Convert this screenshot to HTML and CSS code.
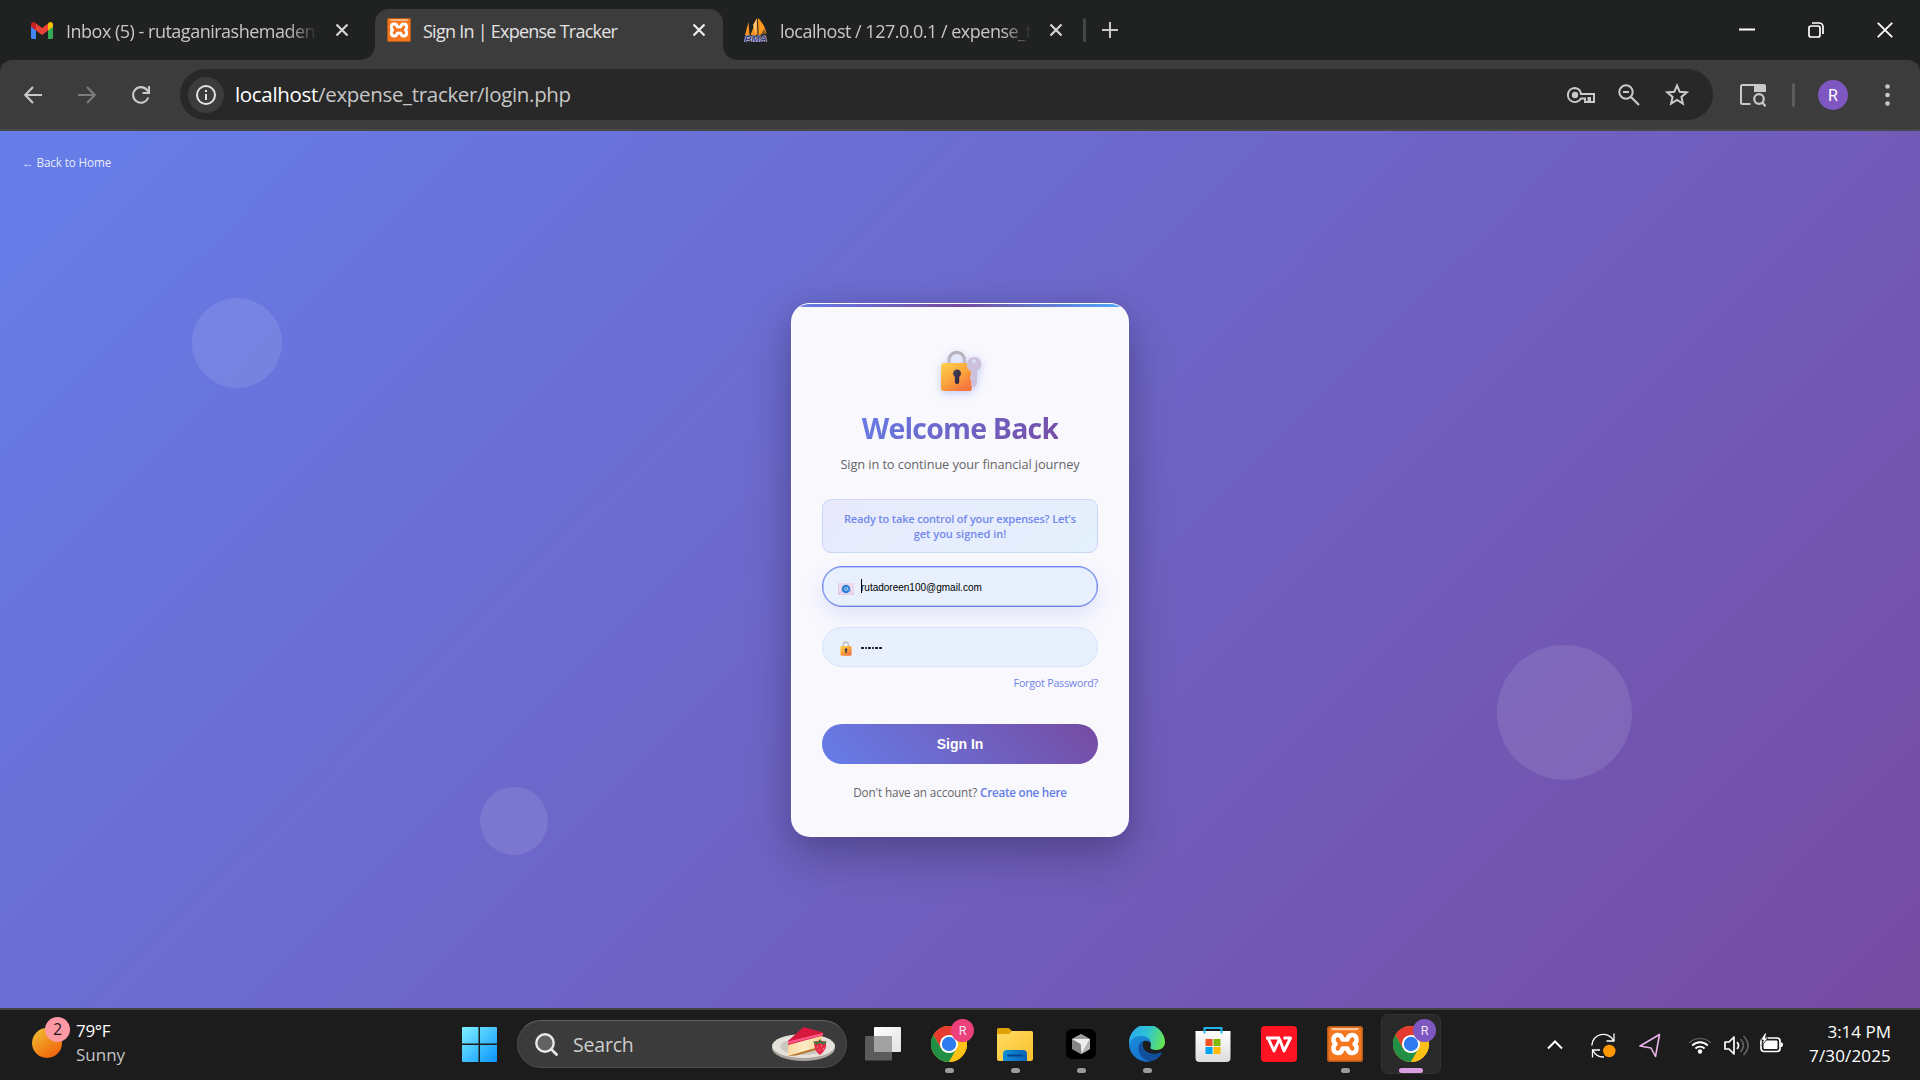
FILE: index.html
```html
<!DOCTYPE html>
<html lang="en">
<head>
<meta charset="utf-8">
<title>Sign In | Expense Tracker</title>
<link rel="stylesheet" href="styles.css">
</head>
<body>
<svg class="defs" width="0" height="0" aria-hidden="true">
  <defs>
    <linearGradient id="gold" x1="0" y1="0" x2=".7" y2="1"><stop offset="0" stop-color="#ffd24d"/><stop offset=".55" stop-color="#fba43c"/><stop offset="1" stop-color="#f5743f"/></linearGradient>
    <linearGradient id="steel" x1="0" y1="0" x2="0" y2="1"><stop offset="0" stop-color="#b4b1b6"/><stop offset="1" stop-color="#c6bccb"/></linearGradient>
    <linearGradient id="hole" x1="0" y1="0" x2="1" y2="1"><stop offset="0" stop-color="#4a4658"/><stop offset="1" stop-color="#2a1d3d"/></linearGradient>
    <linearGradient id="sun" x1="0" y1="0" x2=".7" y2="1"><stop offset="0" stop-color="#f1c232"/><stop offset="1" stop-color="#f2640c"/></linearGradient>
    <linearGradient id="win" x1="0" y1="0" x2="1" y2="1"><stop offset="0" stop-color="#7df0ff"/><stop offset="1" stop-color="#0a94ff"/></linearGradient>
    <linearGradient id="folder" x1="0" y1="0" x2="1" y2="1"><stop offset="0" stop-color="#ffdc66"/><stop offset="1" stop-color="#fbc02a"/></linearGradient>
    <linearGradient id="folderClip" x1="0" y1="0" x2="1" y2="0"><stop offset="0" stop-color="#0f8fd8"/><stop offset="1" stop-color="#0a62b8"/></linearGradient>
    <linearGradient id="edgeTop" x1="0" y1=".3" x2="1" y2=".5"><stop offset="0" stop-color="#2fa9ee"/><stop offset=".5" stop-color="#2cc4d4"/><stop offset="1" stop-color="#66e454"/></linearGradient>
    <linearGradient id="edgeMid" x1="0" y1="0" x2=".5" y2="1"><stop offset="0" stop-color="#1b8ed9"/><stop offset="1" stop-color="#1672ce"/></linearGradient>
    <linearGradient id="paneBack" x1="0" y1="0" x2="1" y2="1"><stop offset="0" stop-color="#fff"/><stop offset="1" stop-color="#e2e2e2"/></linearGradient>
    <linearGradient id="bag" x1="0" y1="0" x2="0" y2="1"><stop offset="0" stop-color="#fff"/><stop offset="1" stop-color="#dcdcdc"/></linearGradient>
    <linearGradient id="cake" x1="0" y1="0" x2="1" y2="0"><stop offset="0" stop-color="#fbd9a0"/><stop offset=".5" stop-color="#fdebc5"/><stop offset="1" stop-color="#f3cf94"/></linearGradient>
    <symbol id="close" viewBox="0 0 14 14"><path d="M1.500 1.500l11 11M12.500 1.500l-11 11" fill="none" stroke="currentColor" stroke-width="2.200"/></symbol>
    <symbol id="xampp" viewBox="0 0 36 36">
      <rect width="36" height="36" rx="3.500" fill="#f4761f"/>
      <rect x=".75" y=".75" width="34.500" height="34.500" rx="3" fill="none" stroke="#b65a1b" stroke-width="1.500"/>
      <path d="M4 2h28l-1.500 2.200h-25z" fill="#ffc79b"/>
      <path d="M8.500 18C5.500 15.500 5.500 9.500 10.500 9c3.500-.3 4.500 2 5 4.500h5c.5-2.500 1.500-4.800 5-4.500 5 .5 5 6.500 2 9 3 2.500 3 8.500-2 9-3.500.3-4.500-2-5-4.500h-5c-.5 2.500-1.500 4.800-5 4.500-5-.5-5-6.500-2-9z" fill="none" stroke="#fff" stroke-width="4.400" stroke-linejoin="round"/>
      <path d="M12.500 18h11" stroke="#f4761f" stroke-width="4"/>
    </symbol>
    <symbol id="chrome" viewBox="0 0 36 36">
      <circle cx="18" cy="18" r="18" fill="#fbc116"/>
      <path d="M2.410 9A18 18 0 0 1 33.590 9L18 9l-7.800 13.500z" fill="#e53b2f"/>
      <path d="M2.410 9A18 18 0 0 0 18 36l7.800-13.500L18 18l-7.800 4.500z" fill="#229044"/>
      <path d="M18 9h15.590A18 18 0 0 1 18 36l7.800-13.500z" fill="#fbc116"/>
      <circle cx="18" cy="18" r="9.100" fill="#fff"/><circle cx="18" cy="18" r="7.200" fill="#2d7bee"/>
    </symbol>
    <symbol id="padlock" viewBox="0 0 34 43">
      <path d="M9 16v-5a7.500 7.500 0 0 1 15 0v5" fill="none" stroke="url(#steel)" stroke-width="3.600"/>
      <rect x="1" y="14" width="32" height="28" rx="3" fill="url(#gold)"/>
      <path d="M17 21a4 4 0 0 1 2.200 7.200v5a2.200 2.200 0 0 1-4.400 0v-5A4 4 0 0 1 17 21z" fill="url(#hole)"/>
    </symbol>
  </defs>
</svg>

<header class="browser">
  <div class="tabs">
    <div class="tab tab-mail">
      <svg class="gmail" viewBox="0 0 22 17"><path d="M0 2.500V15.500A1.500 1.500 0 0 0 1.500 17H5V6.500z" fill="#4285f4"/><path d="M17 17h3.500a1.500 1.500 0 0 0 1.500-1.500V2.500L17 6.500z" fill="#34a853"/><path d="M17 1.500V8.500l5-3.800V2.500C22 .2 19.500-.7 18 .6z" fill="#fbbc04"/><path d="M5 8.500V1.500l6 4.600 6-4.600v7L11 13z" fill="#ea4335"/><path d="M0 2.500v2.200l5 3.800V1.500L4 .6C2.400-.7 0 .2 0 2.500z" fill="#c5221f"/></svg>
      <span class="tab-title">Inbox (5) - rutaganirashemaden</span>
      <svg class="x"><use href="#close"/></svg>
    </div>
    <div class="tab tab-active">
      <svg class="favicon"><use href="#xampp"/></svg>
      <span class="tab-title">Sign In | Expense Tracker</span>
      <svg class="x"><use href="#close"/></svg>
    </div>
    <div class="tab tab-db">
      <svg class="favicon" viewBox="0 0 24 24"><path d="M1 17L4.500 4l1 13zM6.500 17L13 0l.5 17z" fill="#f7931e"/><path d="M14 0c5 5 7 10 8.500 15l-8 2z" fill="#ff9a1f"/><path d="M9 7l4-7-1 17z" fill="#ffc46b"/><path d="M17 16l3-5 3 5z" fill="#8a5520"/><text class="pma" x=".5" y="23.500" textLength="22.500" lengthAdjust="spacingAndGlyphs">PMA</text></svg>
      <span class="tab-title">localhost / 127.0.0.1 / expense_t</span>
      <svg class="x"><use href="#close"/></svg>
    </div>
    <i class="tab-divider"></i>
    <svg class="plus" viewBox="0 0 16 16"><path d="M8 0v16M0 8h16" stroke="#c9c9c9" stroke-width="2"/></svg>
    <div class="window-buttons">
      <svg viewBox="0 0 16 16"><path d="M0 7.500h16" stroke="#fff" stroke-width="2"/></svg>
      <svg viewBox="0 0 16 16"><rect x="1" y="4" width="11" height="11" rx="2" fill="none" stroke="#fff" stroke-width="1.700"/><path d="M4 1h7a4 4 0 0 1 4 4v7" fill="none" stroke="#fff" stroke-width="1.700"/></svg>
      <svg viewBox="0 0 16 16"><path d="M.8.8l14.400 14.400M15.200.8L.8 15.200" stroke="#fff" stroke-width="1.800"/></svg>
    </div>
  </div>
  <div class="toolbar">
    <div class="nav">
      <svg viewBox="0 0 18 18"><path d="M18 9H1.500M9 1L1.300 9 9 17" fill="none" stroke="#c9c9c9" stroke-width="2.100"/></svg>
      <svg viewBox="0 0 18 18"><path d="M0 9h16.500M9 1l7.700 8L9 17" fill="none" stroke="#7c7c7c" stroke-width="2.100"/></svg>
      <svg viewBox="0 0 18 18"><path d="M16.300 11.500A7.800 7.800 0 1 1 15 4l1.800 2" fill="none" stroke="#c9c9c9" stroke-width="2.100"/><path d="M17 0v7h-6.500" fill="none" stroke="#c9c9c9" stroke-width="2.100"/></svg>
    </div>
    <div class="omnibox">
      <span class="site-info"><svg viewBox="0 0 20 20"><circle cx="10" cy="10" r="9" fill="none" stroke="#e3e3e3" stroke-width="2"/><path d="M10 9v6M10 5v2" stroke="#e3e3e3" stroke-width="2"/></svg></span>
      <span class="url"><b>localhost</b>/expense_tracker/login.php</span>
      <svg class="key" viewBox="0 0 28 16"><path d="M8 1a7 7 0 1 0 6 10.500h4V15h3.500v-4h1.500v4H27V7H14A7 7 0 0 0 8 1z" fill="none" stroke="#c9c9c9" stroke-width="2"/><circle cx="8" cy="8" r="3.200" fill="#c9c9c9"/></svg>
      <svg class="lens" viewBox="0 0 22 22"><circle cx="8" cy="8" r="6.700" fill="none" stroke="#c9c9c9" stroke-width="2"/><path d="M5 8h6M13 13l8 8" stroke="#c9c9c9" stroke-width="2.200"/></svg>
      <svg class="star" viewBox="0 0 24 23"><path d="M12 2.500l2.700 6.300 6.900.6-5.200 4.500 1.500 6.700L12 17l-5.900 3.600 1.500-6.700-5.200-4.500 6.900-.6z" fill="none" stroke="#c9c9c9" stroke-width="2"/></svg>
    </div>
    <svg class="tab-search" viewBox="0 0 26 23"><path d="M10.500 20H2.500A1.500 1.500 0 0 1 1 18.500v-16A1.500 1.500 0 0 1 2.500 1H14" fill="none" stroke="#c9c9c9" stroke-width="2"/><path d="M14 0h10a2 2 0 0 1 2 2v6H14z" fill="#c9c9c9"/><circle cx="19" cy="15" r="6.800" fill="#3c3c3c"/><circle cx="19" cy="15" r="4.800" fill="none" stroke="#c9c9c9" stroke-width="2.200"/><path d="M22 18.200l3.600 4" stroke="#c9c9c9" stroke-width="2.200"/></svg>
    <i class="bar-divider"></i>
    <span class="avatar">R</span>
    <svg class="dots" viewBox="0 0 5 22"><circle cx="2.500" cy="2.500" r="2.300" fill="#c9c9c9"/><circle cx="2.500" cy="11" r="2.300" fill="#c9c9c9"/><circle cx="2.500" cy="19.500" r="2.300" fill="#c9c9c9"/></svg>
  </div>
</header>

<main class="page">
  <a class="back">← Back to Home</a>
  <i class="bubble bubble-a"></i><i class="bubble bubble-b"></i><i class="bubble bubble-c"></i>
  <section class="card">
    <svg class="logo" viewBox="0 0 42 43"><path d="M9 16v-5a7.700 7.700 0 0 1 15.400 0v5" fill="none" stroke="url(#steel)" stroke-width="3.200"/><path d="M4 14h23c-.5 4 1.500 7 4 8v4l-1 3 1.500 3-.5 3 1 4-1 3H4a3 3 0 0 1-3-3V17a3 3 0 0 1 3-3z" fill="url(#gold)"/><path d="M17 20.500a4 4 0 0 1 2.200 7.300v5a2.200 2.200 0 0 1-4.400 0v-5A4 4 0 0 1 17 20.500z" fill="url(#hole)"/><path fill-rule="evenodd" d="M34 8a7.200 7.200 0 0 1 3 13.800V35l-3 4-2.500-3v-3l1-2-1-2v-7.200A7.200 7.200 0 0 1 34 8zm0 2.500a1.800 1.800 0 1 0 0 3.600 1.800 1.800 0 0 0 0-3.600z" fill="#cdc0dc"/></svg>
    <h1>Welcome Back</h1>
    <p class="lead">Sign in to continue your financial journey</p>
    <div class="notice">Ready to take control of your expenses? Let's<br><span class="notice-end">get you signed in!</span></div>
    <div class="field field-focus">
      <svg class="mail" viewBox="0 0 16 12"><rect width="16" height="12" fill="#ecd9f0"/><path d="M0 12l5-6M16 12l-5-6M0 0v12h16" fill="none" stroke="#d3b9df" stroke-width=".8"/><circle cx="8" cy="6" r="4.300" fill="#2f7fd6"/><circle cx="8" cy="6" r="1.500" fill="none" stroke="#b8dcff" stroke-width=".8"/><path d="M9.500 4.500v2.200c.4.900 1.500.3 1.400-.9" fill="none" stroke="#b8dcff" stroke-width=".7"/></svg>
      <i class="caret"></i><span>rutadoreen100@gmail.com</span>
    </div>
    <div class="field">
      <svg class="lock"><use href="#padlock"/></svg>
      <span class="dots-text"><i></i><i></i><i></i><i></i><i></i><i></i></span>
    </div>
    <a class="forgot">Forgot Password?</a>
    <button class="submit">Sign In</button>
    <p class="signup"><span>Don't have an account?</span> <a>Create one here</a></p>
  </section>
</main>

<footer class="taskbar">
  <div class="weather">
    <span class="weather-icon"><svg viewBox="0 0 30 30"><circle cx="15" cy="15" r="15" fill="url(#sun)"/></svg><b>2</b></span>
    <div class="weather-text"><span class="temp">79°F</span><span class="sky">Sunny</span></div>
  </div>
  <svg class="start" viewBox="0 0 35 35"><path d="M1 0h15.500v16.500H0V1a1 1 0 0 1 1-1zM18 0h16a1 1 0 0 1 1 1v15.500H18zM0 18h16.500v17H1a1 1 0 0 1-1-1zM18 18h17v16a1 1 0 0 1-1 1H18z" fill="url(#win)"/></svg>
  <div class="search">
    <svg class="search-icon" viewBox="0 0 23 23"><circle cx="10" cy="10" r="8.700" fill="#626262" stroke="#e8e8e8" stroke-width="2.400"/><path d="M16.500 16.500l5 5" stroke="#e8e8e8" stroke-width="2.800" stroke-linecap="round"/></svg>
    <span>Search</span>
    <svg class="cake" viewBox="0 0 63 34"><ellipse cx="31.500" cy="21" rx="31.500" ry="13" fill="#a9a49c"/><ellipse cx="31.500" cy="19" rx="31.500" ry="12" fill="#e4e0da"/><ellipse cx="31.500" cy="19.500" rx="23" ry="8.500" fill="#cbc7c0"/><path d="M16 14l34-8v15l-34 8z" fill="url(#cake)"/><path d="M16 29l34-10v2.500l-26 7z" fill="#b9742c"/><path d="M16 14L31 .5Q33 0 35 1l16 4.500v3L16 18z" fill="#d8183c"/><path d="M16 14.500l35-8.500v2L16 17z" fill="#ff5b8c"/><path d="M42 15q6-3 12 0 1 8-6 13-6-4-6-13z" fill="#e52a48"/><path d="M41 14l5 1 2-3 2 3 5-1-3 4-4-2-4 2z" fill="#387a40"/><path d="M45 20h1M49 19h1M47 23h1M51 22h1" stroke="#ffb0a8"/></svg>
  </div>
  <nav class="apps">
    <div class="app"><svg viewBox="0 0 36 36"><rect x="9" y="1" width="27" height="25" rx="1" fill="url(#paneBack)"/><rect x="0" y="10" width="27" height="24.500" rx="1" fill="#5b5b5b"/><path d="M9 10h18v16H9z" fill="#a2a2a2"/></svg></div>
    <div class="app"><svg><use href="#chrome"/></svg><b class="badge badge-pink">R</b><i class="dot"></i></div>
    <div class="app"><svg viewBox="0 0 36 36"><path d="M0 3.500A1.500 1.500 0 0 1 1.500 2H11q1 0 2 1l2 2v5H0z" fill="#dfa106"/><path d="M0 8h12l3-3h19.500A1.500 1.500 0 0 1 36 6.500v26.500a2 2 0 0 1-2 2H2a2 2 0 0 1-2-2z" fill="url(#folder)"/><path d="M6 35v-7a4 4 0 0 1 4-4h16a4 4 0 0 1 4 4v7z" fill="url(#folderClip)"/><path d="M11 29.500h14" stroke="#07458a" stroke-width="1.800" stroke-linecap="round"/></svg><i class="dot"></i></div>
    <div class="app"><svg viewBox="0 0 36 36"><rect x="3" y="3" width="30" height="30" rx="6" fill="#000"/><path d="M18 8l9 5v10l-9 5-9-5V13z" fill="#777"/><path d="M18 8l9 5-9 3-9-3z" fill="#9d9d9d"/><path d="M9 13l9 3v12l-9-5z" fill="#858585"/><path d="M9 13h18l-8.500 15-.8-10z" fill="#eee"/><path d="M27 13v10l-8.500 5z" fill="#b5b5b5"/></svg><i class="dot"></i></div>
    <div class="app"><svg viewBox="0 0 36 36"><path d="M0 17A18 18 0 0 1 36 16c.2 5-4 8-9 8-4 0-6-1-5.500-3C23 17 21 13 15 12 8 11 2 14 0 20z" fill="url(#edgeTop)"/><path d="M0 18C2 12 8 9.500 14 10c5 .5 8 4 8 8-1-3-4-4-7-3-4 1.500-5 6-4 10 1.500 6 6 9.500 12 10A18 18 0 0 1 0 18z" fill="url(#edgeMid)"/><path d="M14 15c-4 2-5.500 6-4 11 2 6 7 9 13 9 4-1 8-4 10-8 .4-.8-.4-1-1-.7-7 3-17 1-18-6-.2-2 0-3.800 0-5.300z" fill="#114f9d"/></svg><i class="dot"></i></div>
    <div class="app"><svg viewBox="0 0 36 36"><path d="M.5 5h35v27a4 4 0 0 1-4 4h-27a4 4 0 0 1-4-4z" fill="url(#bag)"/><path d="M9.500 7.500V2h17v5.500" fill="none" stroke="#21b5ec" stroke-width="2"/><path d="M10.500 13h7v7h-7z" fill="#f25022"/><path d="M18.500 13h7v7h-7z" fill="#7fba00"/><path d="M10.500 21h7v7h-7z" fill="#00a4ef"/><path d="M18.500 21h7v7h-7z" fill="#ffb900"/></svg></div>
    <div class="app"><svg viewBox="0 0 36 36"><rect width="36" height="36" rx="4" fill="#fe1423"/><path d="M5 12h14M7 12l6 13 5.500-12 4.500 12 6.500-13h-7" fill="none" stroke="#fff" stroke-width="2.900" stroke-linejoin="round"/></svg></div>
    <div class="app"><svg><use href="#xampp"/></svg><i class="dot"></i></div>
    <div class="app app-active"><svg><use href="#chrome"/></svg><b class="badge badge-purple">R</b><i class="dot dot-active"></i></div>
  </nav>
  <div class="tray">
    <svg class="chevron" viewBox="0 0 16 10"><path d="M1 8.500l7-7 7 7" fill="none" stroke="#fff" stroke-width="2"/></svg>
    <svg class="sync" viewBox="0 0 25 25"><path d="M.8 12.500A11.500 11.500 0 0 1 22.500 7.500M23 .5v7.500h-7.500M13 24A11.500 11.500 0 0 1 2 17.500M1.500 24.500V17h7.500" fill="none" stroke="#fff" stroke-width="1.300"/><circle cx="18.300" cy="18" r="6.200" fill="#ff9800"/></svg>
    <svg class="arrow" viewBox="0 0 22 25"><path d="M20.500 1.500L1 13l11 2 4.500 8.500z" fill="none" stroke="#e9b3ea" stroke-width="1.600" stroke-linejoin="round"/></svg>
    <svg class="wifi" viewBox="0 0 24 18"><path d="M1 7a15.500 15.500 0 0 1 22 0" fill="none" stroke="#555" stroke-width="1.500"/><path d="M4.200 9.500a11 11 0 0 1 15.600 0M7.400 12.500a6.500 6.500 0 0 1 9.200 0" fill="none" stroke="#fff" stroke-width="1.800"/><circle cx="12" cy="15.500" r="2.200" fill="#fff"/></svg>
    <svg class="sound" viewBox="0 0 25 21"><path d="M1 7h4l5-5v17l-5-5H1z" fill="none" stroke="#fff" stroke-width="1.700" stroke-linejoin="round"/><path d="M13 7q3 3.500 0 7" fill="none" stroke="#fff" stroke-width="1.600"/><path d="M16.500 4q6 6.500 0 13M19.500 1q9 9.500 0 19" fill="none" stroke="#666" stroke-width="1.500"/></svg>
    <svg class="battery" viewBox="0 0 24 20"><rect x="1" y="5" width="19" height="13.500" rx="3" fill="none" stroke="#fff" stroke-width="1.700"/><rect x="3.500" y="7.500" width="14" height="8.500" rx="1" fill="#fff"/><path d="M20.500 9.500h1.500q2 2 0 4.500h-1.500z" fill="#fff"/><path d="M4.800 0L.7 7h2.600L2 12.500 8 5H5.500L6.500 0z" fill="#fff" stroke="#1c1c1c" stroke-width=".8"/></svg>
    <div class="clock"><span>3:14 PM</span><span class="date">7/30/2025</span></div>
  </div>
</footer>
</body>
</html>
```
FILE: styles.css
```css
* { box-sizing: border-box; }
body {
  margin: 0; width: 1920px; height: 1080px; overflow: hidden;
  display: flex; flex-direction: column;
  font-family: "Open Sans", "Noto Sans", sans-serif; background: #1c1c1c;
}
svg { display: block; flex: none; }
.defs { position: absolute; }

/* Browser chrome */
.browser { height: 131px; background: #202221; flex: none; }
.tabs { height: 60px; display: flex; align-items: center; position: relative; }
.tab { height: 51px; margin-top: 9px; display: flex; align-items: center; padding-bottom: 9px; flex: none; color: #c7c7c7; }
.tab-mail { width: 375px; padding-left: 31px; }
.tab-active { width: 348px; padding-left: 12px; background: #3c3c3c; border-radius: 14px 14px 0 0; color: #e3e3e3; position: relative; }
.tab-active::before, .tab-active::after { content: ""; position: absolute; bottom: 0; width: 14px; height: 14px; }
.tab-active::before { left: -14px; background: radial-gradient(circle at 0 0, transparent 13.5px, #3c3c3c 14px); }
.tab-active::after { right: -14px; background: radial-gradient(circle at 100% 0, transparent 13.5px, #3c3c3c 14px); }
.tab-db { width: 361px; padding-left: 21px; }
.tab-title { font-size: 18px; line-height: 28px; letter-spacing: -.5px; white-space: nowrap; width: 262px; margin: 2px 0 0 13px; -webkit-mask-image: linear-gradient(90deg, #000 222px, transparent 252px); mask-image: linear-gradient(90deg, #000 222px, transparent 252px); }
.tab-active .tab-title { width: 258px; margin-left: 12px; letter-spacing: -.75px; -webkit-mask-image: none; mask-image: none; }
.tab-db .tab-title { margin-left: 12px; }
.gmail { width: 22px; height: 17px; }
.favicon { width: 24px; height: 24px; }
.x { width: 14px; height: 14px; margin-left: 7px; color: #d6d6d6; }
.tab-active .x { color: #f0f0f0; margin-right: 17px; margin-left: auto; }
.pma { font: italic 700 9px "Liberation Sans", sans-serif; fill: #3a3a78; stroke: #c6c6e6; stroke-width: 1.200px; paint-order: stroke; }
.tab-divider { width: 3px; height: 24px; border-radius: 2px; background: #454746; margin-left: -1px; }
.plus { width: 16px; height: 16px; margin-left: 16px; }
.window-buttons { margin-left: auto; margin-right: 27px; display: flex; gap: 53px; }
.window-buttons svg { width: 16px; height: 16px; }
.toolbar { height: 71px; background: #3c3c3c; border-radius: 12px 12px 0 0; display: flex; align-items: center; padding: 0 30px 2px 24px; position: relative; box-shadow: inset 0 -2px 0 #484848; }
.nav { display: flex; gap: 36px; width: 156px; }
.nav svg { width: 18px; height: 18px; }
.omnibox { width: 1533px; height: 51px; border-radius: 26px; background: #282828; display: flex; align-items: center; padding: 0 24px 0 8px; }
.site-info { width: 36px; height: 36px; border-radius: 50%; background: #3c3c3c; display: grid; place-items: center; }
.site-info svg { width: 20px; height: 20px; }
.url { font-size: 20.500px; letter-spacing: -.32px; color: #c7c7c7; margin: -1px auto 0 11px; }
.url b { font-weight: 400; color: #fff; }
.key { width: 28px; height: 16px; margin-right: 23px; }
.lens { width: 22px; height: 22px; margin-right: 25px; }
.star { width: 24px; height: 23px; }
.tab-search { width: 26px; height: 23px; margin-left: 27px; margin-top: 2px; }
.bar-divider { width: 3px; height: 24px; border-radius: 2px; background: #5c5c5c; margin-left: 26px; }
.avatar { width: 30px; height: 30px; border-radius: 50%; background: #7e57c2; color: #fff; font: 16px/31px Roboto, sans-serif; text-align: center; margin-left: 23px; }
.dots { width: 5px; height: 22px; margin-left: auto; }

/* Sign-in page */
.page { height: 877px; flex: none; position: relative; background: linear-gradient(135deg, #667eea, #764ba2); padding-top: 172px; overflow: hidden; }
.back { position: absolute; left: 22px; top: 23px; font-size: 11.700px; line-height: 17px; letter-spacing: -.12px; color: rgba(255, 255, 255, .88); }
.bubble { position: absolute; border-radius: 50%; background: rgba(255, 255, 255, .1); }
.bubble-a { width: 90px; height: 90px; left: 192px; top: 166.500px; }
.bubble-b { width: 135px; height: 135px; left: 1497px; top: 513.500px; }
.bubble-c { width: 68px; height: 68px; left: 479.500px; top: 656px; }
.card { width: 338px; height: 534px; margin: 0 auto; padding: 45px 30px 0; border: 1px solid rgba(255, 255, 255, .9); border-top-color: #fff; border-radius: 19px; display: flex; flex-direction: column; overflow: hidden; background: linear-gradient(90deg, #667eea, #764ba2 50%, #4facfe) 0 0 / 100% 3px no-repeat, #f8f8fd; box-shadow: 0 19px 45px rgba(0, 0, 0, .26), 0 0 22px rgba(0, 0, 0, .06); }
.logo { width: 42px; height: 43px; margin: 0 auto; position: relative; left: .5px; filter: drop-shadow(0 2px 4px rgba(102, 126, 234, .38)); }
.card h1 { margin: 16px auto 0; font-size: 28.500px; line-height: 40px; letter-spacing: -.8px; background: linear-gradient(135deg, #667eea, #764ba2); -webkit-background-clip: text; background-clip: text; color: transparent; white-space: nowrap; }
.lead { margin: 7px 0 0; text-align: center; font-size: 12.800px; line-height: 18px; letter-spacing: -.1px; color: #666; white-space: nowrap; }
.notice { height: 54px; margin-top: 26px; border: 1px solid #ccd6f8; border-radius: 9px; background: linear-gradient(135deg, #e8eafb, #e4f0fd); color: #7388ec; font-size: 11px; font-weight: 600; line-height: 15px; letter-spacing: -.16px; text-align: center; padding-top: 11px; white-space: nowrap; flex: none; }
.notice-end { letter-spacing: 0; }
.field { height: 40px; margin-top: 20px; flex: none; border: 1px solid #d6e3fb; border-radius: 20px; background: #e8f0fe; display: flex; align-items: center; font: 10px "Liberation Sans", Arial, sans-serif; color: #000; padding-left: 15px; }
.field-focus { height: 41px; margin-top: 13px; border: 1px solid #6b82ec; box-shadow: inset 0 0 0 .5px #8fa2f2, 0 8px 19px rgba(102, 126, 234, .17); }
.mail { width: 16px; height: 12px; margin: 5px 7px 0 0; }
.caret { width: 1px; height: 14px; background: #000; margin: -1px -1px 0 0; }
.field span { margin-top: 2px; }
.lock { width: 12px; height: 15px; margin: 2px 9px 0 2px; }
.dots-text { display: flex; gap: .9px; }
.dots-text i { width: 2.700px; height: 2.700px; border-radius: 35%; background: #000; }
.forgot { align-self: flex-end; margin-top: 7px; font-size: 10.700px; line-height: 18px; letter-spacing: -.22px; color: #7084ea; }
.submit { height: 40px; flex: none; margin-top: 32px; border: 0; padding: 0; border-radius: 20px; background: linear-gradient(45deg, #667eea, #764ba2); color: #fff; font: 700 14px "Liberation Sans", Arial, sans-serif; letter-spacing: 0; }
.signup { margin: 19px 0 0; text-align: center; font-size: 11.700px; line-height: 18px; letter-spacing: -.12px; color: #666; white-space: nowrap; }
.signup a { color: #667eea; font-weight: 600; letter-spacing: -.26px; }

/* Taskbar */
.taskbar { height: 72px; flex: none; border-top: 2px solid #414141; background: #1c1c1c; color: #fff; display: flex; align-items: center; font-size: 17px; }
.weather { width: 462px; display: flex; padding-left: 32px; }
.weather-icon { width: 44px; height: 48px; padding-top: 7px; position: relative; }
.weather-icon svg { width: 30px; height: 30px; }
.weather-icon b { position: absolute; left: 13px; top: -4px; width: 25px; height: 25px; border-radius: 50%; background: #ff99a4; color: #1c1c1c; font-size: 16px; font-weight: 400; line-height: 24px; text-align: center; }
.weather-text { display: flex; flex-direction: column; line-height: 24px; margin-top: -2px; }
.temp { letter-spacing: -.3px; }
.sky { color: #c4c4c4; }
.start { width: 35px; height: 35px; margin-right: 20px; margin-top: -1px; }
.search { width: 330px; height: 48px; margin-top: -2px; border-radius: 24px; background: #3b3b3b; border: 1.500px solid #4b4b4b; border-top-color: #626262; display: flex; align-items: center; padding: 0 11px 0 17px; font-size: 19.500px; letter-spacing: -.2px; color: #cecece; }
.search-icon { width: 23px; height: 23px; }
.search span { margin: 0 auto 0 15px; }
.cake { width: 63px; height: 34px; }
.apps { display: flex; margin-left: 3px; height: 60px; margin-top: -2px; }
.app { width: 66px; position: relative; display: flex; justify-content: center; padding-top: 12px; }
.app svg { width: 36px; height: 36px; }
.dot { position: absolute; bottom: 1px; left: 28.500px; width: 9px; height: 5px; border-radius: 3px; background: #9b9b9b; }
.dot-active { width: 24px; left: 21px; background: #dc9ee3; }
.app-active::before { content: ""; position: absolute; inset: 0 3px 0 3px; border: 1.500px solid #333; border-radius: 7px; background: #292929; }
.app-active svg { position: relative; }
.badge { position: absolute; left: 35px; top: 5px; width: 23px; height: 23px; border-radius: 50%; font: 12.500px/24px Roboto, sans-serif; text-align: center; color: #f5e6f3; }
.badge-pink { background: #ec407a; }
.badge-purple { background: #7e57c2; }
.tray { margin-left: auto; display: flex; align-items: center; padding-right: 29px; }
.chevron { width: 16px; height: 10px; margin-right: 28px; }
.sync { width: 25px; height: 25px; margin-right: 23px; }
.arrow { width: 22px; height: 25px; margin-right: 27px; }
.wifi { width: 24px; height: 18px; margin-right: 12px; }
.sound { width: 25px; height: 21px; margin-right: 11px; }
.battery { width: 24px; height: 20px; margin: -4px 24px 0 0; }
.clock { display: flex; flex-direction: column; align-items: flex-end; line-height: 24px; width: 83px; margin-top: -2px; }
.date { letter-spacing: .16px; }
```
